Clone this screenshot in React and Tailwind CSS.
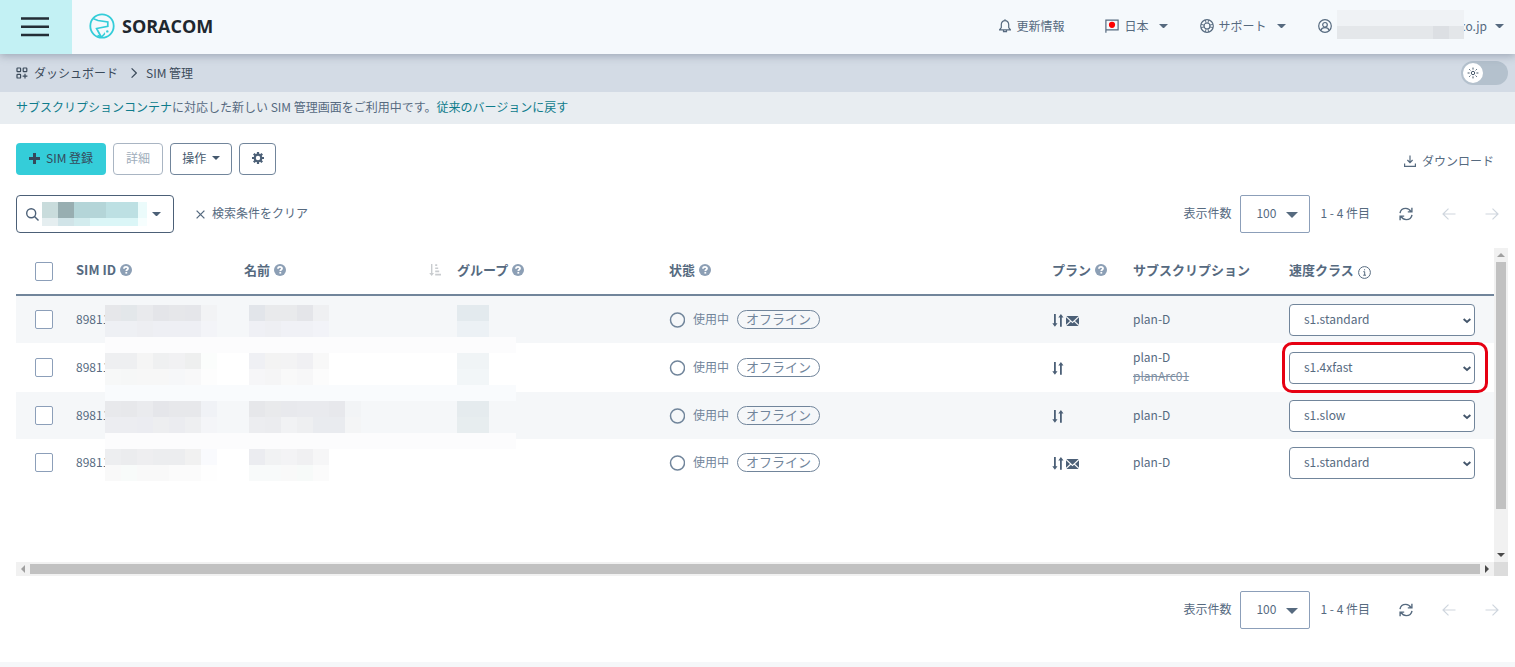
import React, { useState } from 'react';
import clsx from 'clsx';

const rows = [
  { id: '89811', plans: ['plan-D'], sms: true, speed: 's1.standard' },
  { id: '89811', plans: ['plan-D', 'planArc01'], sms: false, speed: 's1.4xfast', highlighted: true },
  { id: '89811', plans: ['plan-D'], sms: false, speed: 's1.slow' },
  { id: '89811', plans: ['plan-D'], sms: true, speed: 's1.standard' },
];

const speedClasses = ['s1.minimum', 's1.slow', 's1.standard', 's1.fast', 's1.4xfast'];

// Pixelated cover for private values: [column, row, width, colour], in cells of 16px
const tableMask = [
  [0, 0, 1, '#e6e7ea'], [1, 0, 1, '#e3e7ea'], [2, 0, 1, '#e9eaed'], [3, 0, 1, '#e4e5e9'], [4, 0, 1, '#e6e7ea'], [5, 0, 1, '#e5e6ea'], [6, 0, 1, '#f2f3f5'],
  [9, 0, 1, '#e2e5ea'], [10, 0, 1, '#e9eaec'], [11, 0, 1, '#e9eaec'], [12, 0, 1, '#e4e5e9'], [13, 0, 1, '#eff0f2'],
  [22, 0, 2, '#e3eaee'],
  [0, 1, 2, '#eef0f4'], [2, 1, 1, '#edeef2'], [3, 1, 3, '#eeeff4'], [6, 1, 1, '#f3f4f8'],
  [9, 1, 1, '#eff0f5'], [10, 1, 1, '#eeeff3'], [11, 1, 2, '#f0f1f6'], [13, 1, 1, '#f2f3f8'],
  [22, 1, 2, '#ecf1f5'],
  [0, 2, 25.7, '#fcfcfd'],
  [0, 3, 2, '#eeeff1'], [2, 3, 1, '#f5f5f5'], [3, 3, 1, '#eff0f1'], [4, 3, 1, '#f1f1f3'], [5, 3, 1, '#eeefef'], [6, 3, 1, '#fbfdfc'],
  [7, 3, 2, '#ffffff'], [9, 3, 1, '#eff0f4'], [10, 3, 1, '#f3f3f3'], [11, 3, 1, '#f3f3f4'], [12, 3, 1, '#f0f0f3'], [13, 3, 1, '#f8f8f8'],
  [22, 3, 2, '#f0f4f6'],
  [0, 4, 1, '#f7f8f8'], [1, 4, 1, '#f6f7f7'], [2, 4, 2, '#f7f7f7'], [4, 4, 1, '#f6f7f9'], [5, 4, 1, '#f8f8f9'], [6, 4, 1, '#fdfdfd'],
  [9, 4, 1, '#f6f6f8'], [10, 4, 1, '#f5f5f6'], [11, 4, 1, '#f9f9f9'], [12, 4, 1, '#f7f7f8'], [13, 4, 1, '#fcfcfc'],
  [22, 4, 2, '#f2f6f8'],
  [0, 5, 25.7, '#f9fbfd'],
  [0, 6, 1, '#e8e9ec'], [1, 6, 1, '#e7e8eb'], [2, 6, 1, '#eaebee'], [3, 6, 1, '#e5e6ea'], [4, 6, 2, '#e7e8eb'], [6, 6, 1, '#f0f2f6'],
  [9, 6, 1, '#e6e7ea'], [10, 6, 1, '#e9eaec'], [11, 6, 1, '#e8e9ed'], [12, 6, 2, '#e9eaee'], [14, 6, 1, '#e7e8ec'], [15, 6, 1, '#f2f4f6'],
  [22, 6, 2, '#e5ebee'],
  [0, 7, 2, '#ecedf1'], [2, 7, 1, '#ebecf1'], [3, 7, 1, '#edeef0'], [4, 7, 1, '#ebecf0'], [5, 7, 1, '#eeeff1'], [6, 7, 1, '#f4f5f8'],
  [9, 7, 1, '#ecedf0'], [10, 7, 1, '#ebecef'], [11, 7, 1, '#f1f2f4'], [12, 7, 1, '#eeeff1'], [13, 7, 2, '#e9ebef'], [15, 7, 1, '#f4f5f6'],
  [22, 7, 2, '#e7edef'],
  [0, 8, 25.7, '#fcfcfd'],
  [0, 9, 1, '#edeef0'], [1, 9, 1, '#ebecee'], [2, 9, 1, '#eeeef0'], [3, 9, 2, '#ecedef'], [5, 9, 1, '#f1f1f1'], [6, 9, 1, '#f9fafd'],
  [9, 9, 1, '#ebecf0'], [10, 9, 1, '#f1f2f3'], [11, 9, 1, '#f3f3f5'], [12, 9, 1, '#f0f0f2'], [13, 9, 1, '#f6f6f7'],
  [0, 10, 1, '#f9f9f9'], [1, 10, 1, '#f8fbfa'], [2, 10, 2, '#f9f9f9'], [4, 10, 2, '#fbfbfb'], [6, 10, 1, '#fefefe'],
  [9, 10, 2, '#f8fafa'], [11, 10, 1, '#f9f9f9'], [12, 10, 1, '#f7faf9'], [13, 10, 1, '#fbfbfb'],
];

const TableMask = () => (
  <svg width="412" height="176" shapeRendering="crispEdges" aria-hidden="true" className="absolute left-[89px] top-[57px]">
    {tableMask.map(([col, row, width, fill]) => (
      <rect key={`${col}-${row}`} x={col * 16} y={row * 16} width={width * 16} height="16" fill={fill} />
    ))}
  </svg>
);

const Caret = ({ className = 'w-[10px]' }) => (
  <svg viewBox="0 0 10 5" className={className} fill="currentColor" aria-hidden="true">
    <path d="M0 0h10L5 5z" />
  </svg>
);

const HelpIcon = () => (
  <svg viewBox="0 0 12 12" className="w-3 h-3 shrink-0 text-[#8c9fb5]" aria-hidden="true">
    <circle cx="6" cy="6" r="6" fill="currentColor" />
    <path d="M4 4.7C4 3.4 4.8 2.8 6 2.8s2 .7 2 1.7c0 1.3-1.7 1.2-1.7 2.5" fill="none" stroke="#fff" strokeWidth="1.8" />
    <rect x="5.4" y="7.9" width="1.8" height="1.7" fill="#fff" />
  </svg>
);

const InfoIcon = () => (
  <svg viewBox="0 0 13 13" className="w-[13px] h-[13px] shrink-0 mt-1" fill="none" stroke="currentColor" aria-hidden="true">
    <circle cx="6.5" cy="6.5" r="5.9" />
    <path d="M5.3 5.7h1.4v3.4M5.2 9.2h2.8M6 3.8h1.1" />
  </svg>
);

const SortIcon = () => (
  <svg viewBox="0 0 12 12" className="w-3 h-3 shrink-0 text-[#c9cccf]" fill="currentColor" aria-hidden="true">
    <path d="M2 0h1.4v9H5L2.7 12 .2 9H2zM6.2.3h2v1.6h-2zM6.2 3.4h3V5h-3zM6.2 6.6h4v1.6h-4zM6.2 9.8H12v1.6H6.2z" />
  </svg>
);

const DataIcon = () => (
  <svg viewBox="0 0 12 13" className="w-3 h-[13px]" fill="currentColor" aria-hidden="true">
    <path d="M2 0h1.8v9.3h1.7L2.9 12.8.3 9.3H2zM8 12.8h1.8V3.5h1.7L8.9 0 6.3 3.5H8z" />
  </svg>
);

const SmsIcon = () => (
  <svg viewBox="0 0 13 10" className="w-[13px] h-[10px]" fill="currentColor" aria-hidden="true">
    <path d="M.4 0h12.2L6.500 5.700zM0 1.200l4 3.700L0 8.700zM13 1.200v7.500L9 4.900zM4.900 5.700l1.600 1.500 1.600-1.500 4.500 4.300H.4z" />
  </svg>
);

const Logo = () => (
  <a href="#home" className="flex items-center gap-[7px] text-[#20272e]">
    <svg viewBox="0 0 26 26" className="w-[26px] h-[26px] text-[#34cdd9]" fill="none" stroke="currentColor" aria-hidden="true">
      <circle cx="13" cy="13" r="11.7" strokeWidth="1.8" />
      <path d="M4.500 5.800l4.500 1.700 9.800 1.400v4.500L7.600 15.500l4.600 8.500" strokeWidth="1.700" />
      <path d="M8.500 22.500l4.200 1.300 3-3" strokeWidth="1.500" />
      <circle cx="18.300" cy="18.400" r="1.200" fill="currentColor" stroke="none" />
      <circle cx="15.500" cy="20.200" r=".7" fill="currentColor" stroke="none" />
    </svg>
    <span className="font-['Open_Sans','Noto_Sans',sans-serif] text-lg font-bold leading-6">SORACOM</span>
  </a>
);

const Header = () => (
  <header className="relative flex h-[54px] bg-[#f5f9fc] shadow-[0_2px_8px_rgba(60,75,95,0.35)]">
    <button type="button" aria-label="メニュー" className="flex w-[72px] items-center justify-center bg-[#c3f1f4] pr-[3px]">
      <svg viewBox="0 0 28 20" className="w-7 h-5" stroke="#232d35" strokeWidth="2.4" aria-hidden="true">
        <path d="M0 1.500h28M0 9.800h28M0 18h28" />
      </svg>
    </button>
    <div className="flex flex-1 items-center justify-between pb-[2px] pl-[17px] pr-[11px]">
      <Logo />
      <nav className="flex items-center text-[#566a7f]">
        <a href="#news" className="flex items-center gap-[6px]">
          <svg viewBox="0 0 12 14" className="w-3 h-[14px]" fill="none" stroke="currentColor" strokeWidth="1.2" aria-hidden="true">
            <path d="M.6 10.800h10.800L9.700 8.600V5.500C9.700 3.200 8.200 1.700 6 1.700S2.300 3.200 2.300 5.500v3.100zM4.500 11v1.700h3V11M6 .3v1.500" />
          </svg>
          更新情報
        </a>
        <button type="button" className="ml-10 flex items-center">
          <svg viewBox="0 0 14 14" className="w-[14px] h-[14px] mr-[6px]" fill="none" stroke="currentColor" aria-hidden="true">
            <path d="M.9 13.800V1.200h12.200v9.600H1" strokeWidth="1.2" />
            <circle cx="7" cy="5.8" r="3.1" fill="#f00" stroke="none" />
          </svg>
          日本
          <Caret className="w-[9px] ml-[10px]" />
        </button>
        <button type="button" className="ml-8 flex items-center">
          <svg viewBox="0 0 14 14" className="w-[14px] h-[14px] mr-[5px]" fill="none" stroke="currentColor" strokeWidth="1.2" aria-hidden="true">
            <circle cx="7" cy="7" r="6.3" />
            <circle cx="7" cy="7" r="3" />
            <path d="M1 5.300l3.200.8M5.300 1l.8 3.200M13 5.300l-3.200.8M8.700 1l-.8 3.200M1 8.700l3.200-.8M5.300 13l.8-3.200M13 8.700l-3.200-.8M8.700 13l-.8-3.200" strokeWidth=".9" />
          </svg>
          サポート
          <Caret className="w-[9px] ml-[10px]" />
        </button>
        <button type="button" className="ml-8 flex items-center">
          <svg viewBox="0 0 14 14" className="w-[14px] h-[14px] mr-[5px]" fill="none" stroke="currentColor" strokeWidth="1.2" aria-hidden="true">
            <circle cx="7" cy="7" r="6.3" />
            <circle cx="7" cy="5.8" r="2.3" />
            <path d="M3 11.400c.4-1.800 1.500-2.800 4-2.800s3.600 1 4 2.800" />
          </svg>
          <svg width="127" height="29" className="relative z-10 -mt-1" shapeRendering="crispEdges" aria-hidden="true">
            <path d="M0 0h127v16H0z" fill="#eff2f5" />
            <path d="M0 16h127v13H0z" fill="#e4e7ea" />
            <path d="M96 16h16v13H96z" fill="#dcdfe3" />
            <path d="M112 16h15v13h-15z" fill="#e3e6e9" />
          </svg>
          <span className="-ml-1">co.jp</span>
          <Caret className="w-[9px] ml-2" />
        </button>
      </nav>
    </div>
  </header>
);

const Breadcrumb = () => (
  <div className="flex h-[38px] items-center justify-between bg-[#d3dbe5] pl-4 pr-[7px] text-[#3b4a5a]">
    <nav className="flex items-center">
      <a href="#dashboard" className="flex items-center gap-[6px]">
        <svg viewBox="0 0 12 12" className="w-3 h-3" fill="none" stroke="currentColor" strokeWidth="1.2" aria-hidden="true">
          <rect x="1" y="1" width="3.6" height="3.6" rx=".6" />
          <rect x="7.2" y="1" width="3.6" height="3.6" rx=".6" />
          <rect x="1" y="7.4" width="3.6" height="3.6" rx=".6" />
          <path d="M9 6.800v4.800M6.600 9.200h4.800" />
        </svg>
        ダッシュボード
      </a>
      <svg viewBox="0 0 6 10" className="w-[6px] h-[10px] ml-[13px] mr-[9px]" fill="none" stroke="currentColor" strokeWidth="1.2" aria-hidden="true">
        <path d="M.6.4L5.300 5 .6 9.600" />
      </svg>
      <span>SIM 管理</span>
    </nav>
    <button type="button" role="switch" aria-checked="false" aria-label="ダークモード" className="h-6 w-[47px] rounded-full bg-[#b4c1cd] p-[2px]">
      <span className="flex h-5 w-5 items-center justify-center rounded-full bg-white">
        <svg viewBox="0 0 12 12" className="w-3 h-3" fill="none" stroke="#46586a" aria-hidden="true">
          <circle cx="6" cy="6" r="1.7" />
          <path d="M6 .6v2M6 9.400v2M.6 6h2M9.400 6h2M2.200 2.200l1.200 1.200M8.600 8.600l1.200 1.200M2.200 9.800l1.200-1.200M8.600 3.400l1.200-1.200" />
        </svg>
      </span>
    </button>
  </div>
);

const Pager = ({ id }) => (
  <div className="flex items-center text-[#566a7f]">
    <label htmlFor={id} className="pb-[2px]">表示件数</label>
    <div className="relative ml-[9px] mr-[10px]">
      <select id={id} defaultValue="100" className="h-[38px] w-[70px] appearance-none rounded-xs border border-[#8c9fb9] bg-white pl-[15px] pb-[2px]">
        <option>50</option>
        <option>100</option>
      </select>
      <Caret className="pointer-events-none absolute right-3 top-[17px] w-3" />
    </div>
    <span className="pb-[2px]">1 - 4 件目</span>
    <button type="button" aria-label="更新" className="ml-[29px]">
      <svg viewBox="0 0 14 14" className="w-[14px] h-[14px]" fill="none" stroke="currentColor" strokeWidth="1.4" aria-hidden="true">
        <path d="M1 6.200C1.500 3.300 3.900 1.400 6.800 1.400c2 0 3.900 1 5.200 3.200M12.900.8v4.100H8.800M13 7.800c-.5 2.900-2.900 4.800-5.800 4.800-2 0-3.900-1-5.200-3.200M1.100 13.200V9.100h4.100" />
      </svg>
    </button>
    <button type="button" disabled aria-label="前へ" className="ml-[29px] text-[#cfd6de]">
      <svg viewBox="0 0 14 12" className="w-[14px] h-3" fill="none" stroke="currentColor" strokeWidth="1.2" aria-hidden="true">
        <path d="M13.500 6H1M6.500.6L1 6l5.500 5.400" />
      </svg>
    </button>
    <button type="button" disabled aria-label="次へ" className="ml-[29px] text-[#cfd6de]">
      <svg viewBox="0 0 14 12" className="w-[14px] h-3" fill="none" stroke="currentColor" strokeWidth="1.2" aria-hidden="true">
        <path d="M.5 6H13M7.500.6L13 6l-5.500 5.400" />
      </svg>
    </button>
  </div>
);

const Checkbox = ({ label }) => (
  <input
    type="checkbox"
    aria-label={label}
    className="block h-[19px] w-[18px] appearance-none rounded-xs border border-[#8c9fb9] bg-white checked:bg-[#34cdd9]"
  />
);

const HeadCell = ({ children, icon, sortable }) => (
  <th scope="col" className="border-b-2 border-[#71859b] px-2 pb-[2px] font-bold">
    <div className="flex items-center gap-1">
      {children}
      {icon}
      {sortable && <span className="ml-auto"><SortIcon /></span>}
    </div>
  </th>
);

const SimRow = ({ sim, index }) => (
  <tr className={clsx('h-[47px]', index % 2 === 0 && 'bg-[#f5f7f9]')}>
    <td className="pl-[19px]"><Checkbox label={`SIM ${index + 1}`} /></td>
    <td className="px-2 pb-[2px]">{sim.id}</td>
    <td></td>
    <td></td>
    <td className="px-2">
      <div className="flex items-center text-[#71859b]">
        <svg viewBox="0 0 16 16" className="w-4 h-4" fill="none" stroke="currentColor" strokeWidth="1.5" aria-hidden="true">
          <circle cx="8.5" cy="8" r="7" />
        </svg>
        <span className="ml-2 pb-[2px]">使用中</span>
        <span className="ml-2 rounded-full border border-[#71859b] px-2 pb-[2px] text-[13px] leading-[15px]">オフライン</span>
      </div>
    </td>
    <td className="px-2 pt-[2px]">
      <div className="flex items-center gap-[2px] text-[#4c6077]">
        <DataIcon />
        {sim.sms && <SmsIcon />}
      </div>
    </td>
    <td className="space-y-px px-2 pb-[7px] pt-[5px] leading-[18px]">
      {sim.plans.map((plan, i) => (
        <div key={plan} className={i > 0 ? 'text-[#7f90a3] line-through' : undefined}>{plan}</div>
      ))}
    </td>
    <td className="px-2">
      <div className="relative w-[186px]">
        <select
          defaultValue={sim.speed}
          aria-label={`速度クラス ${index + 1}`}
          className="block h-8 w-full appearance-none rounded border border-[#71859b] bg-white pb-[2px] pl-[14px]"
        >
          {speedClasses.map((name) => <option key={name}>{name}</option>)}
        </select>
        <svg viewBox="0 0 8 6" className="pointer-events-none absolute right-1 top-[14px] w-2 h-[6px]" fill="none" stroke="#44566b" strokeWidth="2" aria-hidden="true">
          <path d="M.6 1L4 4l3.400-3" />
        </svg>
        {sim.highlighted && (
          <div className="pointer-events-none absolute -bottom-[9px] -left-[7px] -right-[13px] -top-[10px] rounded-[10px] border-[3px] border-[#e60012]"></div>
        )}
      </div>
    </td>
  </tr>
);

const SimTable = () => (
  <div className="grid grid-cols-[minmax(0,1fr)_14px] bg-white">
    <div className="relative min-h-[314px]">
      <table className="w-full table-fixed border-separate border-spacing-0 text-left text-[#566a7f]">
        <colgroup>
          <col className="w-[52px]" />
          <col className="w-[168px]" />
          <col className="w-[213px]" />
          <col className="w-[212px]" />
          <col />
          <col className="w-[81px]" />
          <col className="w-[156px]" />
          <col className="w-[213px]" />
        </colgroup>
        <thead>
          <tr className="h-12 text-[13px]">
            <th scope="col" className="border-b-2 border-[#71859b] pl-[19px]"><Checkbox label="すべて選択" /></th>
            <HeadCell icon={<HelpIcon />}>SIM ID</HeadCell>
            <HeadCell icon={<HelpIcon />} sortable>名前</HeadCell>
            <HeadCell icon={<HelpIcon />}>グループ</HeadCell>
            <HeadCell icon={<HelpIcon />}>状態</HeadCell>
            <HeadCell icon={<HelpIcon />}>プラン</HeadCell>
            <HeadCell>サブスクリプション</HeadCell>
            <HeadCell icon={<InfoIcon />}>速度クラス</HeadCell>
          </tr>
        </thead>
        <tbody>
          {rows.map((sim, index) => <SimRow key={index} sim={sim} index={index} />)}
        </tbody>
      </table>
      <TableMask />
    </div>

    {/* Scrollbars */}
    <div className="flex flex-col items-center bg-[#f1f1f1]">
      <span className="flex h-[14px] items-center text-[#a0a0a0]"><Caret className="w-2 rotate-180" /></span>
      <span className="w-[10px] flex-[247] bg-[#c1c1c1]"></span>
      <span className="flex-[39]"></span>
      <span className="flex h-[14px] items-center text-[#4a4a4a]"><Caret className="w-2" /></span>
    </div>
    <div className="flex h-[14px] items-center bg-[#f1f1f1]">
      <span className="flex w-[14px] justify-center text-[#a0a0a0]"><Caret className="w-2 rotate-90" /></span>
      <span className="h-[10px] flex-1 bg-[#c1c1c1]"></span>
      <span className="flex w-[14px] justify-center text-[#4a4a4a]"><Caret className="w-2 -rotate-90" /></span>
    </div>
    <div className="bg-[#dcdcdc]"></div>
  </div>
);

const Toolbar = () => (
  <div className="flex items-center justify-between pr-[5px]">
    <div className="flex gap-[7px]">
      <button type="button" className="flex h-8 items-center gap-[6px] rounded bg-[#34cdd9] px-[13px] pb-[2px] text-[#35495b]">
        <svg viewBox="0 0 11 11" className="w-[11px] h-[11px]" fill="currentColor" aria-hidden="true">
          <path d="M4 0h3v4h4v3H7v4H4V7H0V4h4z" />
        </svg>
        SIM 登録
      </button>
      <button type="button" disabled className="h-8 rounded border border-[#a9b5c3] px-3 pb-[2px] text-[#a0adbb]">詳細</button>
      <button type="button" className="flex h-8 items-center gap-[6px] rounded border border-[#71859b] px-[11px] pb-[2px] text-[#44586d]">
        操作
        <Caret className="w-2" />
      </button>
      <button type="button" aria-label="設定" className="flex h-8 w-[37px] items-center justify-center rounded border border-[#71859b] pb-[2px] text-[#4c6077]">
        <svg viewBox="0 0 12 12" className="w-3 h-3" aria-hidden="true">
          <circle cx="6" cy="6" r="3.3" fill="none" stroke="currentColor" strokeWidth="2.2" />
          <path d="M6 0v2.500M6 9.500V12M0 6h2.500M9.500 6H12M1.800 1.800l1.600 1.600M8.600 8.600l1.600 1.600M1.800 10.200l1.600-1.600M8.600 3.400l1.600-1.600" stroke="currentColor" strokeWidth="2.2" />
        </svg>
      </button>
    </div>
    <a href="#download" className="flex items-center gap-[6px] pt-1 text-[#566a7f]">
      <svg viewBox="0 0 12 12" className="w-3 h-3" fill="none" stroke="currentColor" strokeWidth="1.2" aria-hidden="true">
        <path d="M6 .5v7M3.400 5L6 7.600 8.600 5M.6 8.500v2.800h10.800V8.500" />
      </svg>
      ダウンロード
    </a>
  </div>
);

const SearchBox = () => {
  const [open, setOpen] = useState(false);

  return (
    <button
      type="button"
      aria-label="検索条件"
      aria-expanded={open}
      onClick={() => setOpen(!open)}
      className="flex h-[38px] items-center rounded border border-[#4c6077] pl-[9px] pr-3 text-[#4c6077]"
    >
      <svg viewBox="0 0 13 13" className="w-[13px] h-[13px] mr-[3px]" fill="none" stroke="currentColor" strokeWidth="1.4" aria-hidden="true">
        <circle cx="5.2" cy="5.2" r="4.5" />
        <path d="M8.500 8.500l4 4" />
      </svg>
      <svg width="105" height="26" className="mr-[5px]" shapeRendering="crispEdges" aria-hidden="true">
        <path d="M0 1h16v16H0z" fill="#c9dcdc" />
        <path d="M16 1h16v16H16z" fill="#98aeb1" />
        <path d="M32 1h32v16H32z" fill="#b4d5d8" />
        <path d="M64 1h32v16H64z" fill="#bde0e3" />
        <path d="M96 1h9v16h-9z" fill="#ebfbfb" />
        <path d="M0 17h16v8H0z" fill="#e5eef0" />
        <path d="M16 17h16v8H16z" fill="#d1e4e8" />
        <path d="M32 17h16v8H32z" fill="#d3ecee" />
        <path d="M48 17h48v8H48z" fill="#dbf6f7" />
        <path d="M96 17h9v8h-9z" fill="#f6fefe" />
      </svg>
      <Caret className="w-[9px]" />
    </button>
  );
};

const App = () => {
  return (
    <div className="bg-white font-['Noto_Sans_CJK_JP',sans-serif] text-xs leading-[18px] text-[#566a7f]">
      <Header />
      <Breadcrumb />
      <p className="bg-[#e8edf1] px-4 pb-2 pt-[6px] text-[#566a7f]">
        <a href="#containers" className="text-[#0f7c8c]">サブスクリプションコンテナ</a>
        に対応した新しい SIM 管理画面をご利用中です。
        <a href="#classic" className="text-[#0f7c8c]">従来のバージョンに戻す</a>
      </p>

      <main className="pt-[19px]">
        <div className="px-4">
          <Toolbar />
          <div className="mt-5 flex items-center justify-between">
            <div className="flex items-center">
              <SearchBox />
              <button type="button" className="ml-[22px] flex items-center gap-[7px]">
                <svg viewBox="0 0 9 9" className="w-[9px] h-[9px]" fill="none" stroke="currentColor" strokeWidth="1.3" aria-hidden="true">
                  <path d="M.6.6l7.800 7.800M8.400.6L.6 8.400" />
                </svg>
                <span className="pb-[2px]">検索条件をクリア</span>
              </button>
            </div>
            <Pager id="page-size-top" />
          </div>
        </div>

        <div className="mt-[15px] pl-4 pr-[7px]">
          <SimTable />
        </div>

        <div className="mt-[15px] flex justify-end px-4">
          <Pager id="page-size-bottom" />
        </div>
      </main>

      <footer className="mt-[33px] h-[5px] bg-[#f5f7f9]"></footer>
    </div>
  );
};

export default App;
